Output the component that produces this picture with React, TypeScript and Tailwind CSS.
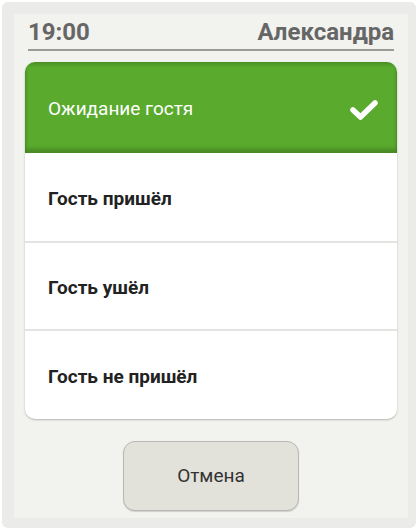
import React from 'react';

const options = [
    { label: 'Гость пришёл', height: 'h-[88px]' },
    { label: 'Гость ушёл', height: 'h-[88px]' },
    { label: 'Гость не пришёл', height: 'h-[90px]' },
];

export default function App() {
    return (
        <div className="h-[532px] w-[418px] bg-white p-[2px] font-['Roboto',sans-serif]">
            <div className="h-[526px] w-[414px] rounded-[6px] bg-[#ebebea] p-3">
                <div className="flex h-[504px] w-[394px] flex-col bg-[#f2f2ee] px-[11px] pt-[5px]">
                    <div className="mx-[3px] flex items-end justify-between border-b-2 border-[#9a9a98] pb-[3px] text-[24px] font-bold leading-[27px] text-[#666666]">
                        <span>19:00</span>
                        <span>Александра</span>
                    </div>

                    <div className="mt-[11px] overflow-hidden rounded-[10px] bg-white shadow-[0_1px_2px_rgba(0,0,0,0.25)]">
                        <div className="flex h-[91px] items-center justify-between bg-[#59aa2d] pl-[23px] pr-[18px] shadow-[inset_0_3px_3px_rgba(0,0,0,0.15),inset_0_-4px_4px_rgba(0,0,0,0.2)]">
                            <span className="pt-[4px] text-[19px] text-white">Ожидание гостя</span>
                            <svg width="30" height="24" viewBox="0 0 30 24" className="mt-[4px]">
                                <path d="M4 12 L11.5 19 L26 5" fill="none" stroke="white" strokeWidth="5.5" strokeLinecap="round" strokeLinejoin="round" />
                            </svg>
                        </div>
                        {options.map((option, index) => (
                            <div
                                key={option.label}
                                className={`flex items-center pl-[23px] text-[19px] font-bold text-[#222222] ${option.height} ${index > 0 ? 'border-t-2 border-[#e4e4e2]' : ''}`}
                            >
                                <span className="pt-[4px]">{option.label}</span>
                            </div>
                        ))}
                    </div>

                    <div className="mt-[22px] flex justify-center">
                        <button className="flex h-[70px] w-[176px] items-center justify-center rounded-[12px] border border-[#b8b8b2] bg-[#e2e2da] text-[19px] text-[#333333] shadow-[0_1px_1px_rgba(0,0,0,0.15)]">
                            Отмена
                        </button>
                    </div>
                </div>
            </div>
        </div>
    );
}
